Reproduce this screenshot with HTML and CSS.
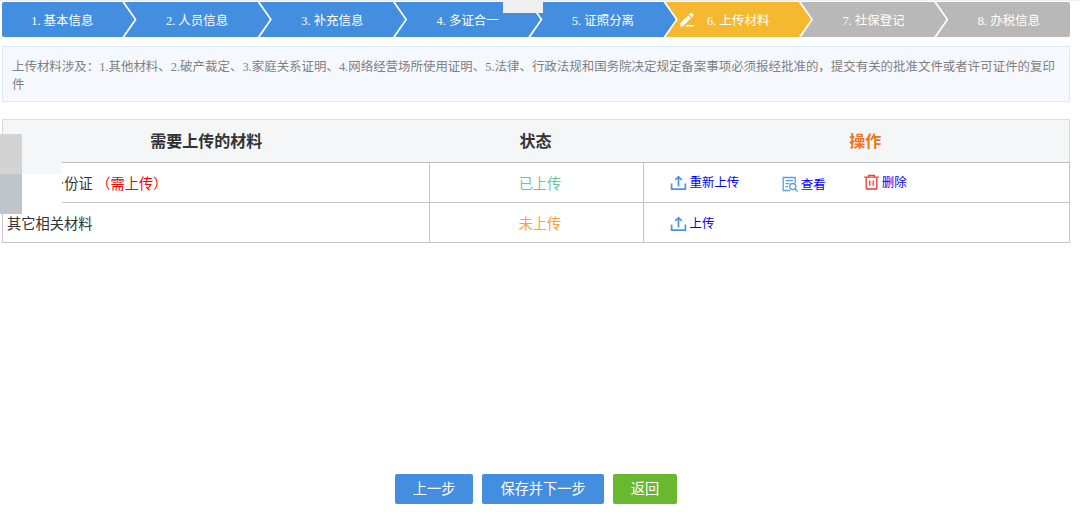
FILE: index.html
```
<!DOCTYPE html>
<html lang="zh-CN">
<head>
  <meta charset="UTF-8" />
  <meta name="viewport" content="width=device-width, initial-scale=1.0"/>
  <title>上传材料</title>
  <link rel="stylesheet" href="styles.css">
</head>
<body>

  <svg class="sprite" aria-hidden="true">
    <symbol id="icon-upload" viewBox="0 0 17 17">
      <path d="M1.6 9.5V15.2H15.4V9.5M8.5 12.4V3M5.2 6L8.5 2.6L11.8 6" fill="none" stroke="#4a94e2" stroke-width="1.7"/>
    </symbol>
    <symbol id="icon-view" viewBox="0 0 17 17">
      <path d="M8 14.5H1.2V1.5H13.2V7M3.5 4.7H11M3.5 7.7H7.5M3.5 10.7H6" fill="none" stroke="#5a9fe3" stroke-width="1.3"/>
      <circle cx="10.8" cy="10.6" r="3.1" fill="none" stroke="#5a9fe3" stroke-width="1.3"/>
      <path d="M13 12.9L15.6 15.6" fill="none" stroke="#5a9fe3" stroke-width="1.4"/>
    </symbol>
    <symbol id="icon-delete" viewBox="0 0 17 17">
      <path d="M1.2 3.1H15.8M5.7 2.9V1.3H11.3V2.9M3.2 3.3V14.4Q3.2 15 3.8 15H13.2Q13.8 15 13.8 14.4V3.3M6.8 6.4V11.8M10.2 6.4V11.8" fill="none" stroke="#fb3434" stroke-width="1.3"/>
    </symbol>
  </svg>

  <div class="top-line"></div>
  <div class="float-tab"></div>

  <ul class="steps">
    <li class="done">1. 基本信息</li>
    <li class="done">2. 人员信息</li>
    <li class="done">3. 补充信息</li>
    <li class="done">4. 多证合一</li>
    <li class="done">5. 证照分离</li>
    <li class="current">
      <svg class="pencil" viewBox="0 0 16 16">
        <path d="M1 14.5V11.6L9.2 3.3L12 6.1L3.9 14.5ZM10.1 2.4L11.5 1Q12.1 .4 12.8 1L14.3 2.5Q15 3.2 14.3 3.9L12.9 5.3ZM8 13H14.8V14.5H6.5Z" fill="#fff"/>
      </svg>
      6. 上传材料
    </li>
    <li>7. 社保登记</li>
    <li>8. 办税信息</li>
  </ul>

  <p class="notice">上传材料涉及：1.其他材料、2.破产裁定、3.家庭关系证明、4.网络经营场所使用证明、5.法律、行政法规和国务院决定规定备案事项必须报经批准的，提交有关的批准文件或者许可证件的复印件</p>

  <div class="materials">
    <table>
      <thead>
        <tr>
          <th class="col-name">需要上传的材料</th>
          <th class="col-status">状态</th>
          <th class="col-action">操作</th>
        </tr>
      </thead>
      <tbody>
        <tr>
          <td class="name indent">身份证 <span class="required">（需上传）</span></td>
          <td class="status uploaded">已上传</td>
          <td>
            <div class="actions">
              <a class="reupload" href="#"><svg><use href="#icon-upload"/></svg>重新上传</a>
              <a class="view" href="#"><svg><use href="#icon-view"/></svg>查看</a>
              <a class="delete" href="#"><svg><use href="#icon-delete"/></svg>删除</a>
            </div>
          </td>
        </tr>
        <tr>
          <td class="name">其它相关材料</td>
          <td class="status pending">未上传</td>
          <td>
            <div class="actions">
              <a class="upload" href="#"><svg><use href="#icon-upload"/></svg>上传</a>
            </div>
          </td>
        </tr>
      </tbody>
    </table>

    <!-- floating side panel, lies over the first column -->
    <div class="side-panel">
      <span class="dark"></span><span class="pale"></span>
      <span class="slate"></span><span class="blank"></span>
    </div>
  </div>

  <div class="buttons">
    <button type="button">上一步</button>
    <button type="button">保存并下一步</button>
    <button type="button" class="back">返回</button>
  </div>

</body>
</html>
```
FILE: styles.css
```
body {
  margin: 0;
  height: 512px;
  overflow: hidden;
  position: relative;
  display: flex;
  flex-direction: column;
  background: #fff;
  font-family: "Liberation Serif", "Noto Sans CJK SC", serif;
  color: #333;
}

.sprite {
  position: absolute;
  width: 0;
  height: 0;
}

.top-line {
  height: 1px;
  flex: none;
  background: #efefef;
}

.float-tab {
  position: absolute;
  z-index: 2;
  top: 0;
  left: 503px;
  width: 40px;
  height: 13px;
  background: #f0f0f0;
}

/* step bar */
.steps {
  display: flex;
  flex: none;
  list-style: none;
  margin: .7px 0 0 2px;
  padding: 0;
  width: 1068px;
  height: 35.8px;
  border-radius: 2px;
  overflow: hidden;
}

.steps li {
  position: relative;
  box-sizing: border-box;
  flex: none;
  width: 145.7px;
  margin-left: -10.4px;
  line-height: 39px;
  font-size: 12.46px;
  text-align: center;
  color: #fff;
  background: #b8b8b8;
  clip-path: polygon(0 0, calc(100% - 12.6px) 0, 100% 50%, calc(100% - 12.6px) 100%, 0 100%, 12.4px 50%);
}

.steps li:first-child {
  width: 132.6px;
  margin-left: 0;
  padding-right: 12px;
  clip-path: polygon(0 0, calc(100% - 12.6px) 0, 100% 50%, calc(100% - 12.6px) 100%, 0 100%);
}

.steps li:last-child {
  width: 134px;
  padding-left: 12px;
  clip-path: polygon(0 0, 100% 0, 100% 100%, 0 100%, 12.4px 50%);
}

.steps .done {
  background: #438ede;
}

.steps .current {
  background: #f5b82e;
}

.pencil {
  position: absolute;
  left: 14px;
  top: 10px;
  width: 16px;
  height: 16px;
}

.notice {
  box-sizing: border-box;
  flex: none;
  width: 1068px;
  height: 56px;
  margin: 8.5px 0 0 2px;
  padding: 11px 9px 0;
  border: 1px solid #dce9f8;
  background: #f5f8ff;
  color: #808080;
  font-size: 12.46px;
  line-height: 18px;
}

/* materials table */
.materials {
  position: relative;
  flex: none;
  width: 1070px;
  height: 124px;
  margin-top: 17px;
}

table {
  width: 1068px;
  margin-left: 2px;
  table-layout: fixed;
  border-collapse: collapse;
  border: 1px solid #d5d8db;
}

th {
  box-sizing: border-box;
  height: 43px;
  padding: 3px 0 0;
  background: #f5f6f8;
  border-top: 1px solid #ddd;
  border-bottom: 1px solid #b9bfc4;
  font-size: 16px;
  line-height: 24px;
}

.col-name {
  width: 427px;
  padding-right: 20px;
}

.col-status {
  width: 214px;
  padding-right: 2px;
}

.col-action {
  color: #ec7420;
  padding-left: 18px;
}

td {
  box-sizing: border-box;
  height: 40px;
  padding: 3px 0 0;
  border: 1px solid #c2c6ca;
  font-size: 14.24px;
  line-height: 22px;
}

.name {
  padding-left: 4px;
}

.indent {
  padding-left: 47px;
}

.required {
  color: #f00;
}

.status {
  padding-left: 7px;
  text-align: center;
}

.uploaded {
  color: #67c797;
}

.pending {
  color: #ffa02f;
}

.actions {
  display: flex;
  padding-left: 26px;
}

.actions a {
  display: flex;
  align-items: center;
  gap: 2.5px;
  height: 20px;
  font-size: 12.46px;
  line-height: 20px;
  text-decoration: none;
  color: #00f;
}

.actions svg {
  width: 17px;
  height: 17px;
}

.actions .view {
  margin-left: 43px;
  padding-top: 2px;
  gap: 1.5px;
}

.actions .delete {
  margin-left: 37.5px;
  gap: 1.5px;
}

.side-panel {
  position: absolute;
  left: 0;
  top: 14.8px;
  display: grid;
  grid-template: 40px 40px / 22px 40px;
}

.dark {
  background: #d3d3d3;
}

.pale {
  background: #f5f6f8;
}

.slate {
  background: #c0c5c9;
}

.blank {
  background: #fff;
}

/* bottom buttons */
.buttons {
  display: flex;
  justify-content: center;
  gap: 9px;
  margin: auto 8px 8px 0;
}

button {
  height: 30px;
  padding: 0 18px;
  border: 0;
  border-radius: 2px;
  background: #438ede;
  color: #fff;
  font-family: inherit;
  font-size: 14.24px;
  line-height: 30px;
}

.back {
  background: #69b82f;
}
```
